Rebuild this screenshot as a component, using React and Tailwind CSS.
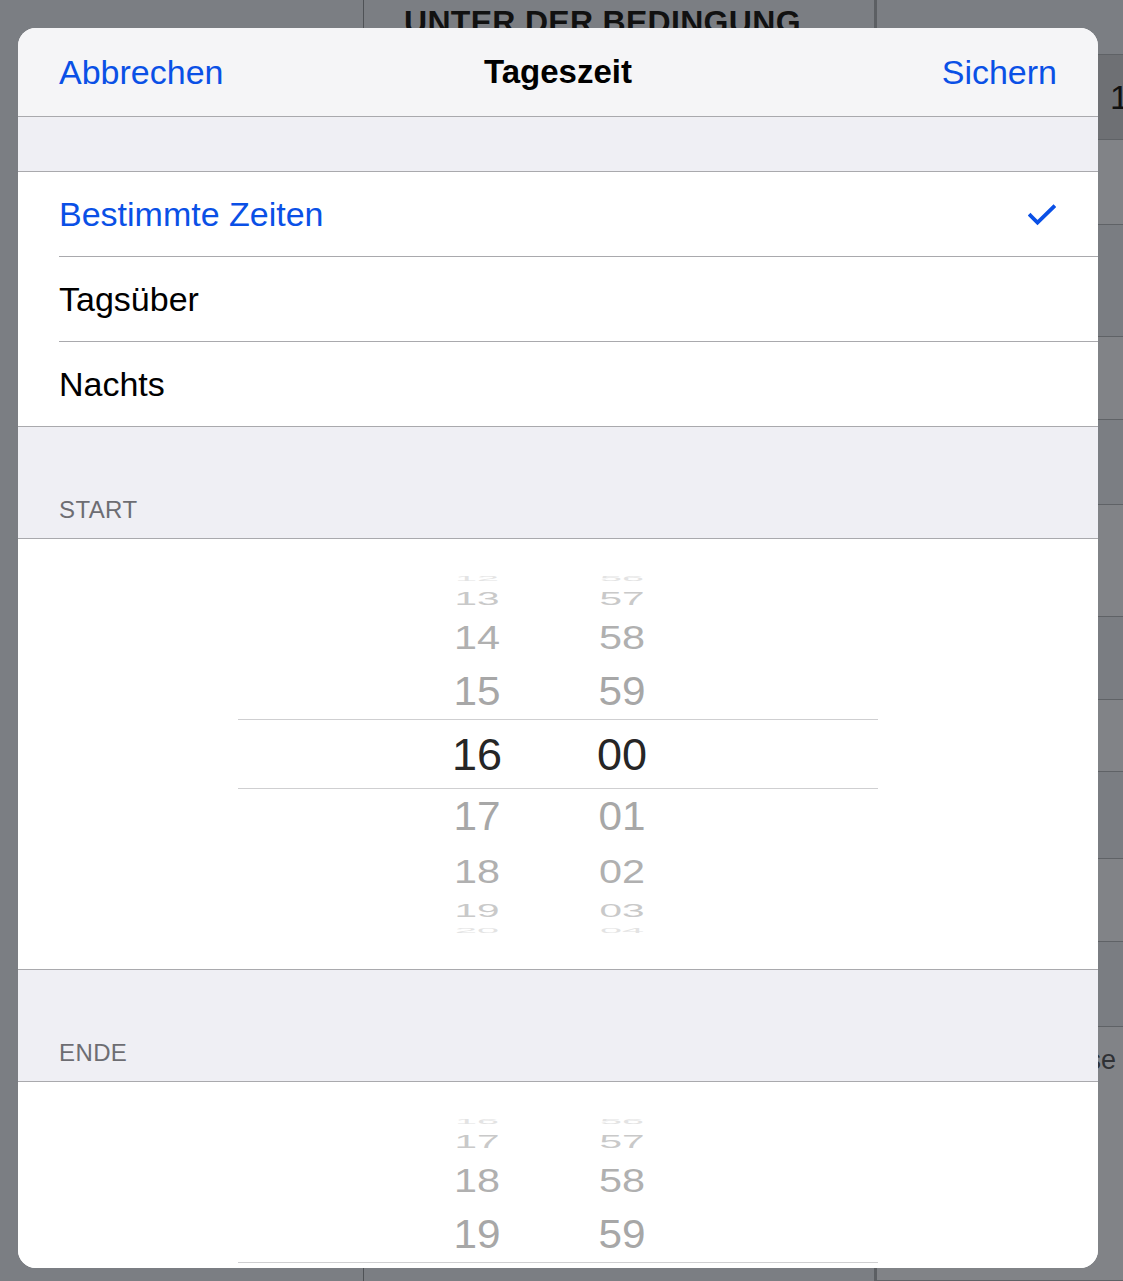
const FONT = "font-['Liberation_Sans',Arial,sans-serif]";

// wheel rows, top to bottom; the middle one is the selected value
const WHEEL_ROWS = [
  { box: "h-[16px]", text: "scale-y-[0.14] scale-x-[0.88] text-[#e3e3e3]" },
  { box: "h-[24px]", text: "scale-y-[0.42] scale-x-[0.9] text-[#c9c9c9]" },
  { box: "h-[54px]", text: "scale-y-[0.72] scale-x-[0.92] text-[#b0b0b0]" },
  { box: "h-[55px]", text: "scale-y-[0.9] scale-x-[0.94] text-[#a7a7a7]" },
  { box: "h-[70px] border-y border-[#cfcfd1]", text: "text-[#262626]" },
  { box: "h-[55px]", text: "scale-y-[0.9] scale-x-[0.94] text-[#a7a7a7]" },
  { box: "h-[54px]", text: "scale-y-[0.72] scale-x-[0.92] text-[#b0b0b0]" },
  { box: "h-[24px]", text: "scale-y-[0.42] scale-x-[0.9] text-[#c9c9c9]" },
  { box: "h-[16px]", text: "scale-y-[0.14] scale-x-[0.88] text-[#e3e3e3]" },
];

const BG_ROWS = [
  { h: "h-[55px]", bg: "bg-[#7b7e83]" },
  { h: "h-[85px]", bg: "bg-[#6e7074]", label: "1" },
  { h: "h-[85px]", bg: "bg-[#818387]" },
  { h: "h-[112px]", bg: "bg-[#7a7d82]" },
  { h: "h-[83px]", bg: "bg-[#818387]" },
  { h: "h-[85px]", bg: "bg-[#7b7e83]" },
  { h: "h-[112px]", bg: "bg-[#818387]" },
  { h: "h-[83px]", bg: "bg-[#7a7d82]" },
  { h: "h-[72px]", bg: "bg-[#818387]" },
  { h: "h-[87px]", bg: "bg-[#7a7d82]" },
  { h: "h-[83px]", bg: "bg-[#818387]" },
  { h: "h-[85px]", bg: "bg-[#7a7d82]" },
  { h: "h-[254px]", bg: "bg-[#818387]", note: "Hinweise" },
];

export default function App() {
  return (
    <div className={`relative h-[1281px] w-full overflow-hidden bg-[#7b7e83] ${FONT}`}>
      <Backdrop />
      <div className="absolute left-[18px] top-[28px] flex h-[1240px] w-[1080px] flex-col overflow-hidden rounded-[18px] bg-white">
        <header className="grid h-[89px] shrink-0 grid-cols-[1fr_auto_1fr] items-center border-b border-[#a9a9ad] bg-[#f5f5f7] px-[41px] text-[34px]">
          <span className="justify-self-start text-[#0a50e6]">Abbrechen</span>
          <span className="text-[33px] font-bold text-black">Tageszeit</span>
          <span className="justify-self-end text-[#0a50e6]">Sichern</span>
        </header>

        <div className="h-[55px] shrink-0 border-b border-[#a9a9ad] bg-[#efeff4]" />

        <Option label="Bestimmte Zeiten" selected />
        <Option label="Tagsüber" />
        <Option label="Nachts" last />

        <SectionHeader title="START" />
        <TimeWheel
          hours={["12", "13", "14", "15", "16", "17", "18", "19", "20"]}
          minutes={["56", "57", "58", "59", "00", "01", "02", "03", "04"]}
        />
        <SectionHeader title="ENDE" />
        <TimeWheel
          hours={["16", "17", "18", "19", "20", "21", "22", "23", "00"]}
          minutes={["56", "57", "58", "59", "00", "01", "02", "03", "04"]}
        />
      </div>
    </div>
  );
}

function Backdrop() {
  return (
    <div className="flex h-full">
      <div className="w-[364px] shrink-0 border-r border-[#4f5256]" />
      <div className="w-[513px] shrink-0 border-r-[3px] border-[#5c5f63] pl-[40px] pt-[2px]">
        <p className="text-[32px] font-bold leading-[40px] tracking-[0.3px] text-[#111]">UNTER DER BEDINGUNG</p>
      </div>
      <div className="flex flex-1 flex-col">
        {BG_ROWS.map((row, i) => (
          <div key={i} className={`${row.h} ${row.bg} relative shrink-0 border-b border-[#5f6266]`}>
            {row.label ? (
              <span className="absolute left-[233px] top-[25px] text-[34px] leading-none text-[#111]">{row.label}</span>
            ) : null}
            {row.note ? (
              <span className="absolute right-[7px] top-[20px] text-[27px] leading-none text-[#2f3135]">{row.note}</span>
            ) : null}
          </div>
        ))}
      </div>
    </div>
  );
}

function Option({ label, selected, last }) {
  return (
    <div className={`flex h-[85px] shrink-0 pl-[41px] ${last ? "border-b border-[#a9a9ad]" : ""}`}>
      <div
        className={`flex flex-1 items-center justify-between pr-[42px] text-[34px] ${
          last ? "" : "border-b border-[#a9a9ad]"
        } ${selected ? "text-[#0a50e6]" : "text-black"}`}
      >
        <span>{label}</span>
        {selected ? (
          <svg width="28" height="22" viewBox="0 0 28 22" className="mt-[1px]">
            <path d="M2.5 11.5 L9.5 18.5 L25.5 3" fill="none" stroke="#0a50e6" strokeWidth="3.8" strokeLinecap="square" />
          </svg>
        ) : null}
      </div>
    </div>
  );
}

function SectionHeader({ title }) {
  return (
    <div className="flex h-[112px] shrink-0 items-end border-b border-[#a9a9ad] bg-[#efeff4] pb-[16px] pl-[41px]">
      <span className="text-[24px] leading-none tracking-[0.4px] text-[#6d6d72]">{title}</span>
    </div>
  );
}

function TimeWheel({ hours, minutes }) {
  return (
    <div className="flex h-[431px] shrink-0 justify-center border-b border-[#a9a9ad] bg-white pt-[31px]">
      <div className="flex w-[640px] flex-col">
        {WHEEL_ROWS.map((row, i) => (
          <div key={i} className={`flex shrink-0 items-center pl-[189px] ${row.box}`}>
            <Cell value={hours[i]} textClass={row.text} />
            <div className="w-[45px]" />
            <Cell value={minutes[i]} textClass={row.text} />
          </div>
        ))}
      </div>
    </div>
  );
}

function Cell({ value, textClass }) {
  return (
    <div className="flex h-full w-[100px] items-center justify-center overflow-visible">
      <span className={`block text-[45px] leading-none ${textClass}`}>{value}</span>
    </div>
  );
}
